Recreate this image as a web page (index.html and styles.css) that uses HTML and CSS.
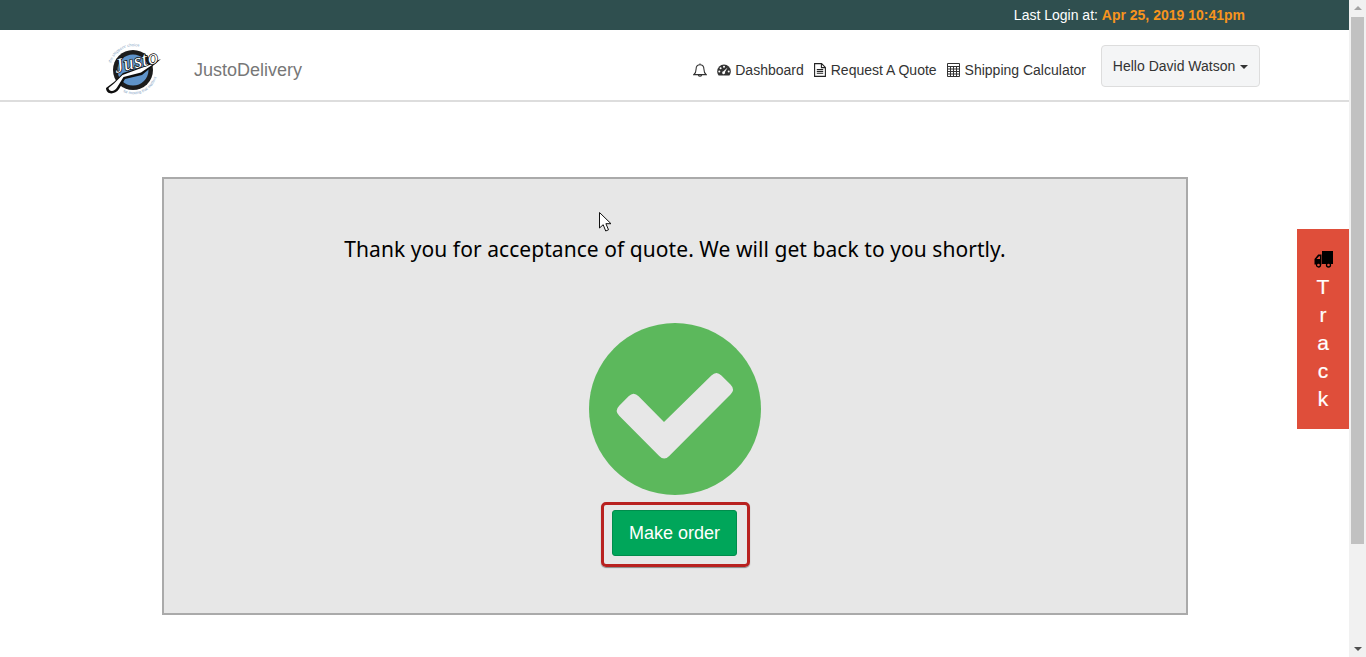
FILE: index.html
```html
<!DOCTYPE html>
<html lang="en">
<head>
  <meta charset="UTF-8" />
  <meta name="viewport" content="width=device-width, initial-scale=1" />
  <title>JustoDelivery</title>
  <link rel="stylesheet" href="styles.css">
</head>
<body>
  <div class="page">
    <div class="topbar">
      Last Login at: <strong class="login-date">Apr 25, 2019 10:41pm</strong>
    </div>

    <header class="navbar">
      <a class="logo" href="#">
        <svg width="60" height="54" viewBox="0 0 60 54">
          <defs>
            <path id="ringTop" d="M7 21 A24 24 0 0 1 36 5" />
            <path id="ringBottom" d="M19 50 A24 24 0 0 0 52 36" />
          </defs>
          <text class="logo-ring"><textPath href="#ringTop">the shippers' choice</textPath></text>
          <text class="logo-ring"><textPath href="#ringBottom">for moving that matters</textPath></text>
          <circle cx="29" cy="28" r="20" fill="#1c1c1c" />
          <circle cx="29" cy="28" r="15.500" fill="#5f93c9" />
          <path d="M2 46 C2 53 11 53 15 47 L21 37 L38 33 L57 17 L38 25 L19 31 L10 40 Z" fill="#0e0e0e" />
          <path d="M4.500 46 C5 50 10.500 50 13 45.500 L19.500 35 L37 30.500 L51 21 L36 26.500 L18.500 33 L10 41.500 Z" fill="#fff" />
          <text class="logo-script" x="12" y="31" transform="rotate(-14 12 31)">Justo</text>
        </svg>
      </a>
      <a class="brand" href="#">JustoDelivery</a>

      <nav class="nav-links">
        <a class="nav-link" href="#">
          <svg class="nav-icon" width="14" height="15" viewBox="0 0 14 15"><path d="M7 1.700c-2.600 0-3.900 1.900-3.900 4.200 0 3.200-.9 4.500-2.300 5.700h12.400c-1.400-1.200-2.300-2.500-2.300-5.700 0-2.300-1.300-4.200-3.900-4.200zM5.300 12a1.800 1.800 0 0 0 3.400 0M7 .4v1.300" fill="none" stroke="#333" stroke-width="1.100" /></svg>
        </a>
        <a class="nav-link" href="#">
          <svg class="nav-icon" width="14" height="12" viewBox="0 0 14 12"><path d="M7 .5A6.800 6.800 0 0 0 .2 7.300c0 1.600.5 3 1.400 4.200h10.800c.9-1.200 1.400-2.600 1.400-4.200A6.800 6.800 0 0 0 7 .5z" fill="#333" /><g fill="#fff"><circle cx="7" cy="2.800" r="1" /><circle cx="3.600" cy="4.300" r="1" /><circle cx="2.300" cy="7.600" r="1" /><circle cx="11.700" cy="7.600" r="1" /><path d="M10.600 3.600 L8 8 a1.500 1.500 0 1 1-1.500-.8z" /></g></svg>
          Dashboard
        </a>
        <a class="nav-link nav-link-wide" href="#">
          <svg class="nav-icon" width="12" height="14" viewBox="0 0 12 14"><path d="M.6.6h7l3.800 3.800v9H.6zM7.400.8v3.800h3.800M2.800 6.500h6.400M2.800 8.400h6.400M2.800 10.300h6.400" fill="none" stroke="#222" stroke-width="1.100" /></svg>
          Request A Quote
        </a>
        <a class="nav-link nav-link-wide" href="#">
          <svg class="nav-icon" width="13" height="14" viewBox="0 0 13 14"><path d="M.5.5h12v13H.5zM.5 3.500h12M.5 6h12M.5 8.500h12M.5 11h12M3.500 3.500v10M6.500 3.500v10M9.500 3.500v10" fill="none" stroke="#333" stroke-width="1" /></svg>
          Shipping Calculator
        </a>
      </nav>

      <button class="user-btn">Hello David Watson <span class="caret"></span></button>
    </header>

    <main class="card">
      <p class="card-msg">Thank you for acceptance of quote. We will get back to you shortly.</p>
      <svg class="check" width="172" height="172" viewBox="0 0 172 172">
        <circle cx="86" cy="86" r="86" fill="#5cb85c" />
        <path d="M75 99 L122.400 52.400 Q127.400 47.400 132.400 52.400 L141.500 61.500 Q146.500 66.500 141.500 71.500 L80.200 132.900 Q75.200 137.900 70.200 132.900 L30.200 92.800 Q25.200 87.800 30.200 82.800 L39.600 73.300 Q44.600 68.300 49.600 73.300 Z" fill="#e7e7e7" />
      </svg>
      <div class="highlight">
        <button class="order-btn">Make order</button>
      </div>
    </main>

    <a class="track-tab" href="#">
      <svg class="track-icon" width="19" height="17" viewBox="0 0 19 17">
        <path d="M8 0h11v13H8z" fill="#000" />
        <path d="M7.500 3.500H4.200L.5 8v5.500h7zM2.500 8l2.500-2.800h1V8z" fill="#000" fill-rule="evenodd" />
        <circle cx="4.500" cy="14" r="2" fill="#df4e3a" stroke="#000" stroke-width="1.300" />
        <circle cx="14.500" cy="14" r="2" fill="#df4e3a" stroke="#000" stroke-width="1.300" />
      </svg>
      <span>T</span><span>r</span><span>a</span><span>c</span><span>k</span>
    </a>

    <svg class="cursor" width="14" height="21" viewBox="0 0 14 21">
      <path d="M.5.5v15.500l3.700-3.300 2.500 6.300 2.800-1.200-2.600-6.100h5.100z" fill="#fff" stroke="#111" stroke-width="1" />
    </svg>
  </div>

  <div class="scrollbar">
    <span class="arrow-up"></span>
    <div class="thumb"></div>
    <span class="arrow-down"></span>
  </div>
</body>
</html>
```

FILE: styles.css
```css
html, body {
  height: 657px;
  overflow: hidden;
}

body {
  margin: 0;
  display: flex;
  font-family: "Liberation Sans", Arial, sans-serif;
  font-size: 14px;
  color: #333;
  background-color: #fff;
}

a {
  color: inherit;
  text-decoration: none;
}

.page {
  position: relative;
  flex: 1;
  min-width: 0;
}

.topbar {
  height: 30px;
  line-height: 30px;
  padding-right: 104px;
  text-align: right;
  color: #fff;
  background-color: #2f4f4f;
}

.login-date {
  color: #f7941d;
}

.navbar {
  display: flex;
  align-items: center;
  height: 70px;
  padding: 0 89px 0 104px;
  border-bottom: 2px solid #ddd;
}

.logo {
  display: flex;
  width: 60px;
  margin-top: 8px;
}

.logo-ring {
  font-family: "Liberation Sans", Arial, sans-serif;
  font-size: 4px;
  fill: #7f9fc4;
}

.logo-script {
  font-family: "Liberation Serif", serif;
  font-style: italic;
  font-size: 20px;
  letter-spacing: 0.5px;
  fill: #fff;
  stroke: #0e0e0e;
  stroke-width: 1.4px;
  paint-order: stroke;
}

.brand {
  margin: 10px 0 0 30px;
  font-size: 18px;
  color: #777;
}

.nav-links {
  display: flex;
  align-items: center;
  gap: 10px;
  margin-left: auto;
  margin-right: 15px;
  padding-top: 10px;
}

.nav-link {
  display: flex;
  align-items: center;
  gap: 4px;
}

.nav-link-wide {
  gap: 5px;
}

.user-btn {
  height: 42px;
  width: 159px;
  padding: 0;
  margin-top: 2px;
  font-family: inherit;
  font-size: 14px;
  color: #333;
  background-color: #f4f5f6;
  border: 1px solid #ddd;
  border-radius: 4px;
}

.caret {
  display: inline-block;
  margin-left: 1px;
  vertical-align: middle;
  border-top: 4px solid #333;
  border-left: 4px solid transparent;
  border-right: 4px solid transparent;
}

.card {
  display: flex;
  flex-direction: column;
  align-items: center;
  box-sizing: border-box;
  width: 1026px;
  height: 438px;
  margin: 75px 0 0 162px;
  background-color: #e7e7e7;
  border: 2px solid #aaa;
}

.card-msg {
  margin: 55px 0 0;
  font-family: "Noto Sans", "Open Sans", sans-serif;
  font-size: 21px;
  letter-spacing: 0.06px;
  line-height: 30px;
  color: #000;
}

.check {
  display: block;
  margin-top: 59px;
}

.highlight {
  display: flex;
  justify-content: center;
  align-items: center;
  box-sizing: border-box;
  width: 149px;
  height: 65px;
  margin-top: 7px;
  padding: 0 2px 4px 0;
  border: 3px solid #b8211f;
  border-radius: 5px;
  box-shadow: 0 1px 1px #888;
}

.order-btn {
  width: 125px;
  height: 46px;
  padding: 1px 0 0 1px;
  font-family: inherit;
  font-size: 18px;
  color: #fff;
  background-color: #00a65a;
  border: 1px solid #008d4c;
  border-radius: 3px;
}

.track-tab {
  position: absolute;
  top: 229px;
  right: 0;
  display: flex;
  flex-direction: column;
  align-items: center;
  box-sizing: border-box;
  width: 52px;
  height: 200px;
  padding-top: 22px;
  font-size: 21px;
  line-height: 28px;
  color: #fff;
  -webkit-text-stroke: 0.2px #fff;
  background-color: #df4e3a;
}

.track-icon {
  margin-bottom: 5px;
}

.cursor {
  position: absolute;
  top: 212px;
  left: 599px;
}

.scrollbar {
  display: flex;
  flex-direction: column;
  align-items: center;
  width: 17px;
  height: 657px;
  background-color: #f1f1f1;
}

.thumb {
  width: 13px;
  height: 527px;
  margin-top: 7px;
  background-color: #c1c1c1;
}

.arrow-up, .arrow-down {
  width: 0;
  height: 0;
  border-left: 4px solid transparent;
  border-right: 4px solid transparent;
}

.arrow-up {
  margin-top: 6px;
  border-bottom: 4px solid #a3a3a3;
}

.arrow-down {
  margin-top: auto;
  margin-bottom: 6px;
  border-top: 4px solid #505050;
}
```
